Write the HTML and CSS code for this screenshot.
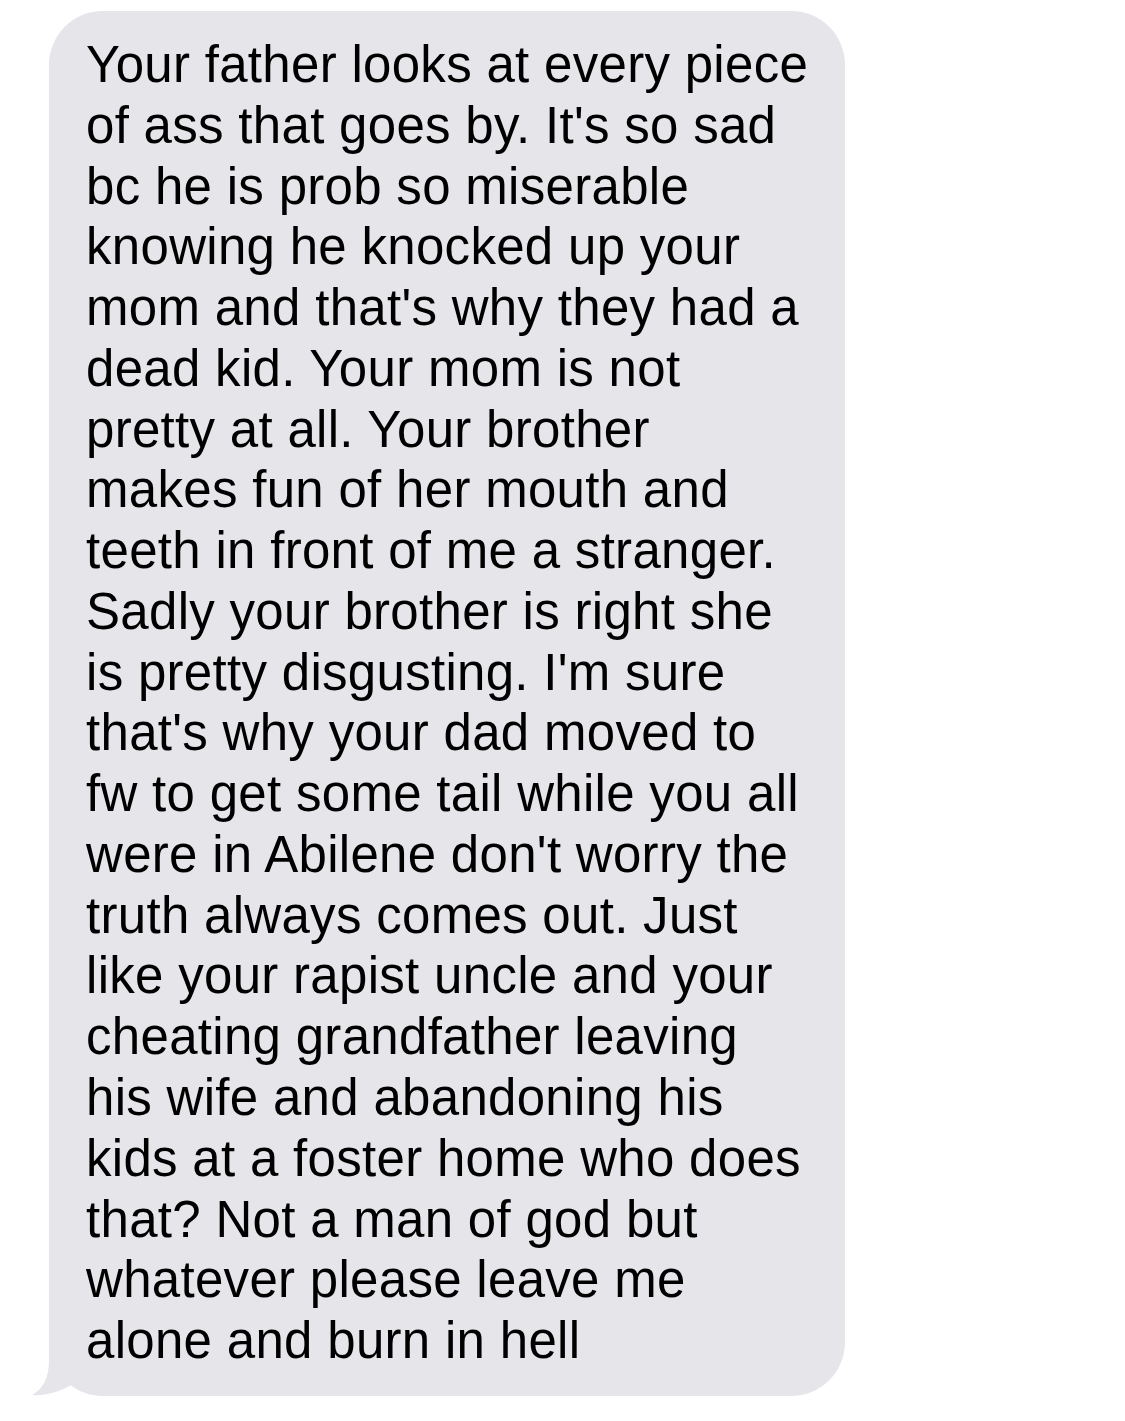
FILE: index.html
```html
<!DOCTYPE html>
<html>
<head>
<meta charset="utf-8">
<link rel="stylesheet" href="styles.css">
</head>
<body>
<div class="thread">
  <div class="bubble">
    <p class="msg">Your father looks at every piece<br>of ass that goes by. It's so sad<br>bc he is prob so miserable<br>knowing he knocked up your<br>mom and that's why they had a<br>dead kid. Your mom is not<br>pretty at all. Your brother<br>makes fun of her mouth and<br>teeth in front of me a stranger.<br>Sadly your brother is right she<br>is pretty disgusting. I'm sure<br>that's why your dad moved to<br>fw to get some tail while you all<br>were in Abilene don't worry the<br>truth always comes out. Just<br>like your rapist uncle and your<br>cheating grandfather leaving<br>his wife and abandoning his<br>kids at a foster home who does<br>that? Not a man of god but<br>whatever please leave me<br>alone and burn in hell</p>
    <svg class="tail" width="80" height="56" viewBox="0 0 80 56"><path d="M20 0 L20 20 C20 38 14 49 3 55 C16 56 30 52 42 45 L42 0 Z" fill="#e5e5ea"/></svg>
  </div>
</div>
</body>
</html>
```
FILE: styles.css
```css
html, body {
  margin: 0;
  padding: 0;
  background: #ffffff;
}
.thread {
  padding: 11px 0 0 49px;
}
.bubble {
  position: relative;
  width: 796px;
  height: 1385px;
  box-sizing: border-box;
  background: #e5e5ea;
  border-radius: 54px;
  padding: 24px 0 0 37px;
}
.msg {
  margin: 0;
  font-family: "Liberation Sans", Arial, sans-serif;
  font-size: 51px;
  line-height: 60.76px;
  letter-spacing: 0.3px;
  color: #000;
  white-space: nowrap;
}
.tail {
  position: absolute;
  left: -20px;
  bottom: 0;
  display: block;
}
```
